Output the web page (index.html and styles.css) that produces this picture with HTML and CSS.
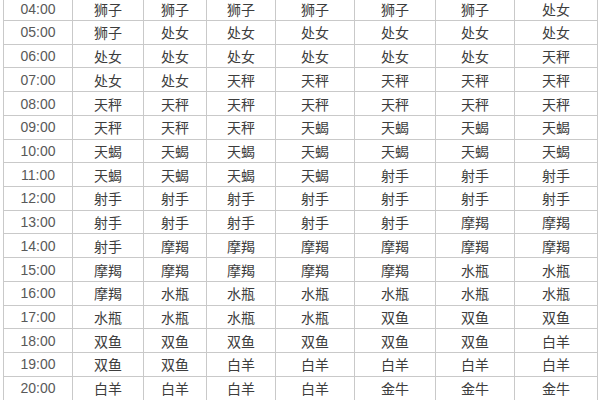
FILE: index.html
```html
<!DOCTYPE html>
<html lang="zh">
<head>
<meta charset="utf-8">
<link rel="stylesheet" href="styles.css">
</head>
<body>
<div class="sheet" id="sheet"></div>
<script src="app.js"></script>
</body>
</html>
```

FILE: app.js
```js
const rows = [
  ["04:00","狮子","狮子","狮子","狮子","狮子","狮子","处女"],
  ["05:00","狮子","处女","处女","处女","处女","处女","处女"],
  ["06:00","处女","处女","处女","处女","处女","处女","天秤"],
  ["07:00","处女","处女","天秤","天秤","天秤","天秤","天秤"],
  ["08:00","天秤","天秤","天秤","天秤","天秤","天秤","天秤"],
  ["09:00","天秤","天秤","天秤","天蝎","天蝎","天蝎","天蝎"],
  ["10:00","天蝎","天蝎","天蝎","天蝎","天蝎","天蝎","天蝎"],
  ["11:00","天蝎","天蝎","天蝎","天蝎","射手","射手","射手"],
  ["12:00","射手","射手","射手","射手","射手","射手","射手"],
  ["13:00","射手","射手","射手","射手","射手","摩羯","摩羯"],
  ["14:00","射手","摩羯","摩羯","摩羯","摩羯","摩羯","摩羯"],
  ["15:00","摩羯","摩羯","摩羯","摩羯","摩羯","水瓶","水瓶"],
  ["16:00","摩羯","水瓶","水瓶","水瓶","水瓶","水瓶","水瓶"],
  ["17:00","水瓶","水瓶","水瓶","水瓶","双鱼","双鱼","双鱼"],
  ["18:00","双鱼","双鱼","双鱼","双鱼","双鱼","双鱼","白羊"],
  ["19:00","双鱼","双鱼","白羊","白羊","白羊","白羊","白羊"],
  ["20:00","白羊","白羊","白羊","白羊","金牛","金牛","金牛"]
];
const sheet = document.getElementById("sheet");
rows.forEach(r => {
  r.forEach((v, i) => {
    const c = document.createElement("div");
    c.className = i === 0 ? "cell time" : "cell sign";
    c.textContent = v;
    sheet.appendChild(c);
  });
});
```

FILE: styles.css
```css
html, body {
  margin: 0;
  padding: 0;
  background: #ffffff;
  overflow: hidden;
}
body {
  width: 600px;
  height: 400px;
}
.sheet {
  margin-top: -3.73px;
  margin-left: 3px;
  width: 595px;
  display: grid;
  grid-template-columns: 68px 70px 62px 68px 78px 80px 78px 82px;
  grid-auto-rows: 22.73px;
  gap: 1px;
  padding: 1px;
  box-sizing: border-box;
  background: #c9c9c9;
}
.cell {
  background: #ffffff;
  display: flex;
  align-items: center;
  justify-content: center;
  font-size: 14px;
  line-height: 1;
}
.time {
  font-family: "Liberation Sans", Arial, sans-serif;
  color: #595959;
}
.sign {
  font-family: "Noto Sans CJK SC", "Noto Sans", sans-serif;
  color: #3d3d3d;
}
```
